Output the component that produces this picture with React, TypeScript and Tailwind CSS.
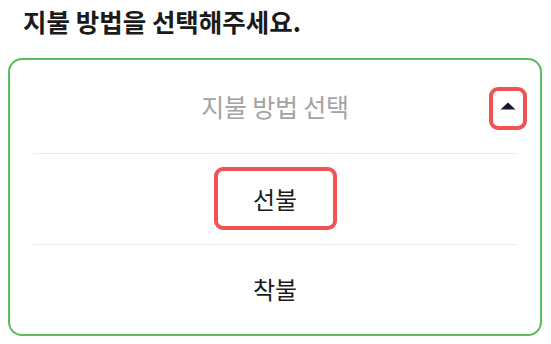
import { useState } from 'react';

const font = { fontFamily: '"Noto Sans CJK KR", "Noto Sans", sans-serif' };

type PayMethod = '선불' | '착불';

const options: PayMethod[] = ['선불', '착불'];

function CaretUp() {
  return (
    <svg width="16" height="8" viewBox="0 0 16 8" aria-hidden="true">
      <path d="M8 0.5 L15.5 7.5 L0.5 7.5 Z" fill="#141a2e" />
    </svg>
  );
}

export default function App() {
  const [selected, setSelected] = useState<PayMethod | null>('선불');

  return (
    <div className="w-[551px] h-[344px] bg-white overflow-hidden" style={font}>
      {/* Title */}
      <h1 className="pl-[23px] pt-[4px] text-[25.5px] leading-[34px] font-bold text-[#1b1b1b]">
        지불 방법을 선택해주세요.
      </h1>

      {/* Dropdown */}
      <div className="ml-[8px] mt-[20px] w-[534px] h-[278px] rounded-[14px] border-2 border-[#5cbd5c] flex flex-col">
        <div className="relative flex items-center justify-center h-[93px] shrink-0">
          <span className="text-[25px] font-normal text-[#a3a3a3] tracking-[-0.2px]">지불 방법 선택</span>
          <button className="absolute right-[13px] top-[27px] w-[38px] h-[43px] rounded-[9px] border-4 border-[#f25252] flex items-center justify-center pb-[5px]">
            <CaretUp />
          </button>
        </div>

        {options.map(o => (
          <div key={o} className="flex flex-col flex-1">
            <div className="mx-[23px] h-px bg-[#ececec]" />
            <div className="flex-1 flex items-center justify-center">
              <button
                onClick={() => setSelected(o)}
                className={
                  selected === o
                    ? 'w-[123px] h-[63px] rounded-[9px] border-4 border-[#f25252] text-[24px] text-[#1b1b1b] flex items-center justify-center'
                    : 'w-[123px] h-[63px] border-4 border-transparent text-[24px] text-[#1b1b1b] flex items-center justify-center'
                }
              >
                {o}
              </button>
            </div>
          </div>
        ))}
      </div>
    </div>
  );
}
